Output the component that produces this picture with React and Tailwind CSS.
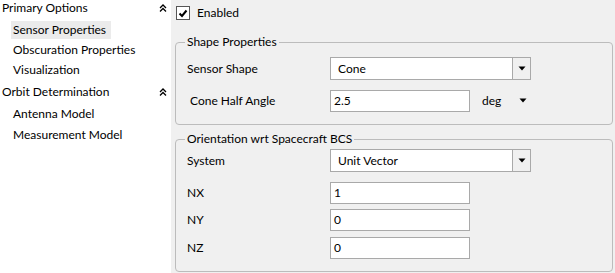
import React from "react";

const font = { fontFamily: "Lato, 'Noto Sans', sans-serif" };

function Chevrons() {
  return (
    <svg width="8" height="8" viewBox="0 0 8 8" className="block">
      <polyline points="1,4 4,1 7,4" fill="none" stroke="#000" strokeWidth="1.3" />
      <polyline points="1,7.5 4,4.5 7,7.5" fill="none" stroke="#000" strokeWidth="1.3" />
    </svg>
  );
}

function Arrow() {
  return (
    <svg width="8" height="5" viewBox="0 0 8 5" className="block">
      <polygon points="0.5,0.5 7.5,0.5 4,4.5" fill="#000" />
    </svg>
  );
}

function Select({ value }) {
  return (
    <div className="flex w-[201px] h-[23px] border border-[#a9a9a9] bg-white">
      <div className="flex-1 flex items-center pl-[7px] text-[12px] text-black">{value}</div>
      <div className="w-[18px] h-full border-l border-[#a9a9a9] bg-[#f0f0f0] flex items-center justify-center">
        <Arrow />
      </div>
    </div>
  );
}

function Input({ value }) {
  return (
    <div className="w-[140px] h-[22px] border border-[#a9a9a9] bg-white flex items-center pl-[3px] text-[12px] text-black">
      {value}
    </div>
  );
}

function Row({ label, children, labelClass = "pl-[11px]", className = "" }) {
  return (
    <div className={"flex items-center " + className}>
      <div className={"w-[154px] text-[12px] text-black " + labelClass}>{label}</div>
      {children}
    </div>
  );
}

export default function App() {
  return (
    <div className="flex w-[615px] h-[273px] overflow-hidden" style={font}>
      <div className="w-[171px] h-full bg-white text-[12px] text-black relative">
        <div className="flex items-center justify-between h-[15px] pl-[2px] pr-[4px] mt-0">
          <span>Primary Options</span>
          <Chevrons />
        </div>
        <div className="mt-[6px] ml-[11px] w-[100px] h-[18px] bg-[#ebebeb] flex items-center pl-[2px]">Sensor Properties</div>
        <div className="h-[20px] flex items-center pl-[13px] mt-[1px]">Obscuration Properties</div>
        <div className="h-[20px] flex items-center pl-[13px]">Visualization</div>
        <div className="flex items-center justify-between h-[20px] pl-[2px] pr-[4px] mt-[2px]">
          <span>Orbit Determination</span>
          <Chevrons />
        </div>
        <div className="h-[21px] flex items-center pl-[13px] mt-[1px]">Antenna Model</div>
        <div className="h-[21px] flex items-center pl-[13px]">Measurement Model</div>
      </div>

      <div className="flex-1 h-full bg-[#f0f0f0] pl-[4px] pr-[2px]">
        <div className="flex items-center mt-[6px] ml-[1px] h-[14px]">
          <div className="w-[14px] h-[14px] border border-[#555] bg-white flex items-center justify-center">
            <svg width="10" height="9" viewBox="0 0 10 9">
              <polyline points="1.5,4.5 4,7 8.5,1.5" fill="none" stroke="#000" strokeWidth="2" />
            </svg>
          </div>
          <span className="ml-[7px] text-[12px] text-black">Enabled</span>
        </div>

        <fieldset className="mt-[14px] h-[91px] border border-[#bcbcbc] rounded-[4px] p-0 m-0">
          <legend className="ml-[9px] px-[2px] h-[16px] leading-[16px] text-[12px] text-black">Shape Properties</legend>
          <Row label="Sensor Shape" className="mt-[7px]">
            <Select value="Cone" />
          </Row>
          <Row label="Cone Half Angle" labelClass="pl-[14px]" className="mt-[10px]">
            <Input value="2.5" />
            <span className="ml-[12px] text-[12px] text-black">deg</span>
            <span className="ml-[18px] mt-[-2px]"><Arrow /></span>
          </Row>
        </fieldset>

        <fieldset className="mt-[6px] h-[141px] border border-[#bcbcbc] rounded-[4px] p-0 m-0">
          <legend className="ml-[9px] px-[2px] h-[16px] leading-[16px] text-[12px] text-black">Orientation wrt Spacecraft BCS</legend>
          <Row label="System" className="mt-[2px]">
            <Select value="Unit Vector" />
          </Row>
          <Row label="NX" className="mt-[10px]">
            <Input value="1" />
          </Row>
          <Row label="NY" className="mt-[5px]">
            <Input value="0" />
          </Row>
          <Row label="NZ" className="mt-[6px]">
            <Input value="0" />
          </Row>
        </fieldset>
      </div>
    </div>
  );
}
